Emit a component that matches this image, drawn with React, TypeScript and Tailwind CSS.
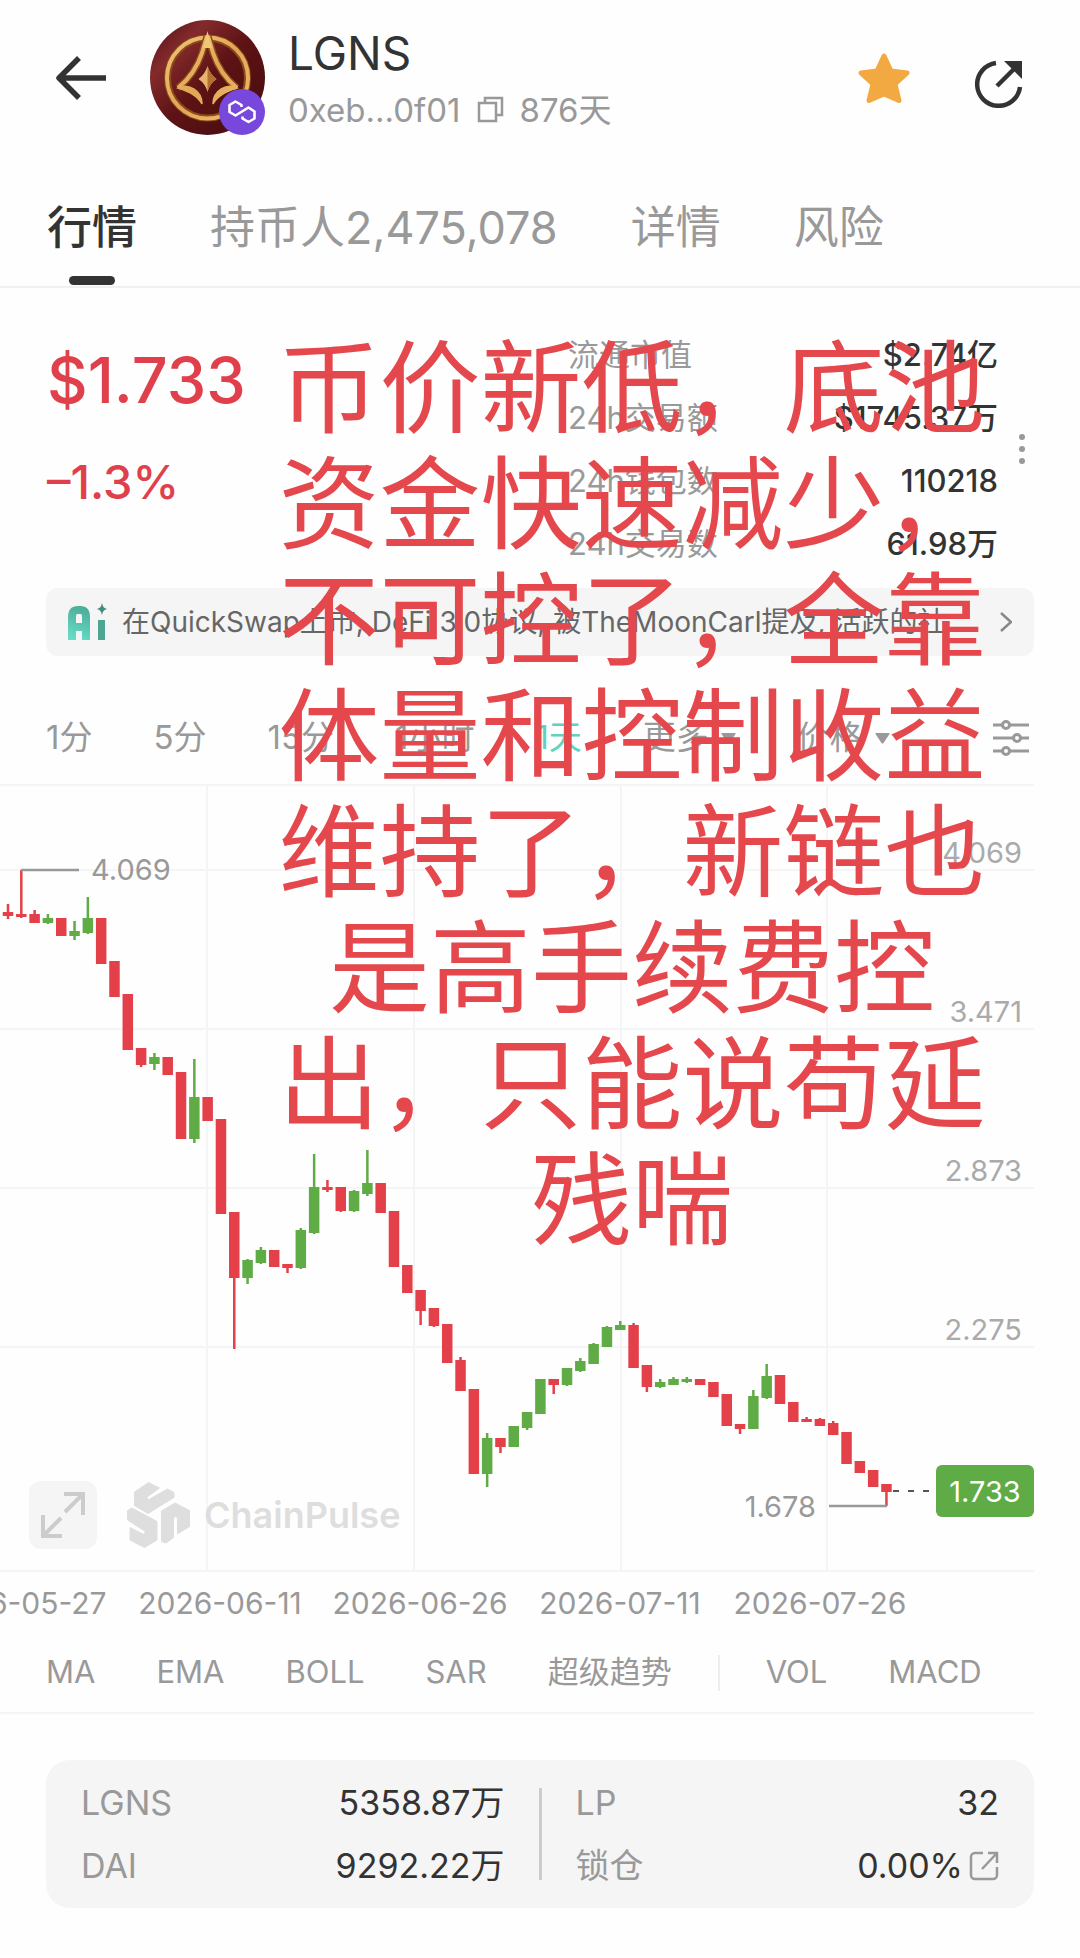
import { useState } from "react";

type Candle = [open: number, close: number, high: number, low: number];

// Pixel rows inside the plot: [open, close, high, low]. Smaller value = higher price.
const candles: Candle[] = [
  [128, 132, 120, 135], [130, 133, 86, 134], [130, 139, 126, 139], [139, 134, 130, 140],
  [134, 152, 134, 152], [152, 147, 137, 156], [149, 134, 113, 150], [134, 180, 134, 180],
  [177, 213, 177, 213], [210, 266, 210, 266], [264, 281, 264, 283], [280, 273, 269, 286],
  [273, 291, 273, 291], [288, 355, 288, 355], [355, 313, 275, 359], [313, 337, 313, 337],
  [335, 430, 335, 430], [428, 494, 428, 565], [494, 476, 475, 500], [479, 466, 463, 480],
  [466, 483, 466, 483], [480, 484, 480, 489], [484, 446, 444, 485], [449, 403, 370, 450],
  [403, 406, 396, 408], [403, 427, 403, 428], [427, 407, 406, 428], [410, 399, 366, 412],
  [399, 429, 399, 429], [427, 483, 427, 483], [481, 509, 481, 509], [506, 527, 506, 541],
  [524, 542, 524, 543], [540, 579, 540, 579], [576, 607, 573, 607], [605, 690, 605, 690],
  [690, 654, 649, 703], [654, 663, 654, 669], [663, 642, 642, 663], [644, 628, 628, 646],
  [630, 595, 595, 630], [595, 601, 595, 610], [601, 584, 584, 602], [587, 577, 574, 588],
  [580, 560, 559, 580], [563, 543, 542, 563], [546, 541, 537, 546], [541, 584, 539, 584],
  [581, 603, 581, 608], [603, 598, 595, 604], [601, 595, 593, 601], [598, 595, 593, 599],
  [595, 601, 595, 601], [598, 613, 598, 613], [610, 642, 610, 642], [640, 645, 640, 650],
  [645, 612, 606, 645], [614, 592, 580, 615], [591, 620, 591, 620], [618, 638, 618, 638],
  [635, 638, 633, 638], [635, 642, 634, 642], [639, 651, 637, 651], [648, 680, 648, 680],
  [677, 689, 677, 689], [686, 703, 686, 703], [700, 708, 700, 722],
];

const priceLevels = [
  { label: "4.069", y: 86 },
  { label: "3.471", y: 245 },
  { label: "2.873", y: 404 },
  { label: "2.275", y: 563 },
];

const tabs = ["行情", "持币人2,475,078", "详情", "风险"];

const stats = [
  { label: "流通市值", value: "$2.74亿" },
  { label: "24h交易额", value: "$1745.37万" },
  { label: "24h钱包数", value: "110218" },
  { label: "24h交易数", value: "61.98万" },
];

const intervals = ["1分", "5分", "15分", "1小时", "1天"];
const dates = ["2026-05-27", "2026-06-11", "2026-06-26", "2026-07-11", "2026-07-26"];
const mainIndicators = ["MA", "EMA", "BOLL", "SAR", "超级趋势"];
const subIndicators = ["VOL", "MACD"];

export default function App() {
  return (
    <div className="relative w-full overflow-hidden bg-[#fefefe] pb-12 font-['Inter','Noto_Sans_CJK_SC',sans-serif] text-[#999]">
      <TokenHeader />
      <Tabs />
      <main>
        <Summary />
        <AiBanner />
        <IntervalBar />
        <PriceChart />
        <IndicatorBar />
        <PoolCard />
      </main>
      <p className="pointer-events-none absolute top-[330px] left-[272px] w-[720px] text-center text-[101px] leading-[116px] text-[#e4484d]">
        币价新低，底池资金快速减少，不可控了，全靠体量和控制收益维持了，新链也是高手续费控出，只能说苟延残喘
      </p>
    </div>
  );
}

const TokenHeader = () => (
  <header className="flex h-[155px] items-center pr-[57px] pl-[55px]">
    <button aria-label="返回" className="text-[#333]">
      <svg width="52" height="44" viewBox="0 0 52 44" fill="none" stroke="currentColor" strokeWidth="5.500">
        <path d="M51 22H4M24 2L4 22l20 20" strokeLinejoin="round" />
      </svg>
    </button>
    <div className="relative ml-[43px]">
      <TokenLogo />
      <span className="absolute right-0 bottom-0 flex size-[46px] items-center justify-center rounded-full bg-[#7847dc]">
        <svg width="30" height="26" viewBox="0 0 30 26" fill="none" stroke="#fff" strokeWidth="2.600" strokeLinejoin="round">
          <path d="M14.500 8V6L8.500 2.500 2.500 6v7l6 3.500 13-8 6 4v7l-6 3.500-6-3.500v-2" />
        </svg>
      </span>
    </div>
    <div className="ml-[23px] pt-2">
      <h1 className="text-[46px] leading-[56px] text-[#333]">LGNS</h1>
      <div className="flex items-center text-[33px] leading-[58px]">
        <span>0xeb...0f01</span>
        <button aria-label="复制" className="mx-4">
          <svg width="27" height="27" viewBox="0 0 27 27" fill="none" stroke="currentColor" strokeWidth="2.500">
            <path d="M2 7h17v18H2zM8 7V2h17v17h-6" />
          </svg>
        </button>
        <span>876天</span>
      </div>
    </div>
    <button aria-label="收藏" className="ml-auto text-[#f2a942]">
      <svg width="54" height="52" viewBox="0 0 54 52" fill="currentColor" stroke="currentColor" strokeWidth="5" strokeLinejoin="round">
        <path d="M27 4l7 15 16 2-12 11 4 16.500L27 42l-15 6.500L16 32 4 21l16-2z" />
      </svg>
    </button>
    <button aria-label="分享" className="mt-3 ml-[64px] text-[#333]">
      <svg width="48" height="48" viewBox="0 0 48 48" fill="none" stroke="currentColor" strokeWidth="4.500">
        <path d="M21 3A21.500 21.500 0 1 0 45 27M22 26L39 9" />
        <path d="M29 1h18v18z" fill="currentColor" stroke="none" />
      </svg>
    </button>
  </header>
);

const TokenLogo = () => (
  <svg width="115" height="115" viewBox="0 0 115 115" fill="none">
    <defs>
      <linearGradient id="coin" x1="0" y1="0" x2="1" y2="1">
        <stop offset="0" stopColor="#4e0f11" />
        <stop offset="0.25" stopColor="#832a2c" />
        <stop offset="0.5" stopColor="#5e1315" />
        <stop offset="1" stopColor="#430c0e" />
      </linearGradient>
      <linearGradient id="gold" gradientUnits="userSpaceOnUse" x1="15" y1="15" x2="100" y2="100">
        <stop offset="0" stopColor="#f0c777" />
        <stop offset="0.5" stopColor="#e2a654" />
        <stop offset="1" stopColor="#f0bf6c" />
      </linearGradient>
    </defs>
    <circle cx="57.500" cy="57.500" r="57.500" fill="url(#coin)" />
    <circle cx="57.500" cy="58" r="40" stroke="#8a4a1c" strokeWidth="7" />
    <circle cx="57.500" cy="58" r="40.500" stroke="url(#gold)" strokeWidth="4" />
    <path d="M57 16L52 33C47 48 38 60 28 68M58 16l5 17C68 48 77 60 87 68" stroke="#8a4a1c" strokeWidth="7" />
    <path d="M57 16L52 33C47 48 38 60 28 68M58 16l5 17C68 48 77 60 87 68" stroke="url(#gold)" strokeWidth="4" />
    <path d="M28 68c10-5 24 2 24 16-4-8-12-12-24-16zM87 68c-10-5-24 2-24 16 4-8 12-12 24-16z" fill="url(#gold)" stroke="url(#gold)" strokeWidth="1.500" />
    <path d="M57.500 11L53 28h9z" fill="#f0c777" />
    <path d="M57.500 46c2 6 5 10 9 13-4 3-7 6-9 13-2-7-5-10-9-13 4-3 7-7 9-13z" fill="#e9b56a" />
    <path d="M57.500 46c2 6 5 10 9 13-4 3-7 6-9 13z" fill="#b4702f" />
  </svg>
);

function Tabs() {
  const [active, setActive] = useState<string>("行情");

  return (
    <nav className="flex h-[133px] items-end gap-[73px] border-b-2 border-[#f0f0f0] pb-px pl-[47px] text-[45px] leading-[60px]">
      {tabs.map((tab) => (
        <button
          key={tab}
          onClick={() => setActive(tab)}
          className={`flex flex-col items-center gap-[18px] whitespace-nowrap ${active === tab ? "font-medium text-[#333]" : ""}`}
        >
          {tab}
          <span className={`h-[9px] w-[46px] rounded-full ${active === tab ? "bg-[#333]" : ""}`} />
        </button>
      ))}
    </nav>
  );
}

const Summary = () => (
  <section className="flex justify-between pt-[35px] pr-[46px] pb-[13px] pl-[47px]">
    <div className="pt-[21px] font-medium text-[#e0404b]">
      <div className="text-[63px] leading-[72px]">$1.733</div>
      <div className="mt-[36px] text-[47px] leading-[60px]">–1.3%</div>
    </div>
    <div className="flex items-center">
      <dl className="w-[430px] text-[31px] leading-[63px]">
        {stats.map((item) => (
          <div key={item.label} className="flex justify-between">
            <dt>{item.label}</dt>
            <dd className="font-medium text-[#333]">{item.value}</dd>
          </div>
        ))}
      </dl>
      <button aria-label="更多数据" className="ml-3 flex w-6 flex-col items-center gap-[6px]">
        <span className="size-[6px] rounded-full bg-[#999]" />
        <span className="size-[6px] rounded-full bg-[#999]" />
        <span className="size-[6px] rounded-full bg-[#999]" />
      </button>
    </div>
  </section>
);

const AiBanner = () => (
  <a href="#ai" className="mx-[46px] flex h-[68px] items-center rounded-xl bg-[#f5f5f5] px-[22px] text-[28px] text-[#666]">
    <svg width="40" height="38" viewBox="0 0 40 38" fill="none" className="shrink-0">
      <defs>
        <linearGradient id="ai" gradientUnits="userSpaceOnUse" x1="20" y1="4" x2="8" y2="36">
          <stop offset="0" stopColor="#4aa997" />
          <stop offset="1" stopColor="#66dcc6" />
        </linearGradient>
      </defs>
      <path d="M4 37V14q0-7 6-7h2q6 0 6 7V37M4 24h14" stroke="url(#ai)" strokeWidth="8" />
      <path d="M30 17h7v20h-7z" fill="#4fa593" />
      <path d="M34 0c1 4 2 5 5 6-3 1-4 2-5 6-1-4-2-5-5-6 3-1 4-2 5-6z" fill="#3f8f80" />
    </svg>
    <span className="ml-[14px] min-w-0 flex-1 whitespace-nowrap">
      在QuickSwap上市, DeFi 3.0协议, 被TheMoonCarl提及, 活跃的社...
    </span>
    <svg width="12" height="22" viewBox="0 0 12 22" fill="none" stroke="#888" strokeWidth="2.500" className="shrink-0">
      <path d="M1 2l10 9-10 9" />
    </svg>
  </a>
);

const Caret = () => (
  <svg width="15" height="11" viewBox="0 0 15 11" fill="currentColor">
    <path d="M1 0h13q1 0 .5 1L8.500 10q-1 1-2 0L.5 1Q0 0 1 0z" />
  </svg>
);

function IntervalBar() {
  const [active, setActive] = useState<string>("1天");

  return (
    <div className="mt-[36px] flex h-[92px] items-center gap-[61px] pr-[51px] pl-[46px] text-[33px] whitespace-nowrap">
      {intervals.map((item) => (
        <button key={item} onClick={() => setActive(item)} className={active === item ? "text-[#5fd3bf]" : ""}>
          {item}
        </button>
      ))}
      <button className="flex items-center gap-3">
        更多 <Caret />
      </button>
      <button className="flex items-center gap-3">
        价格 <Caret />
      </button>
      <button aria-label="图表设置" className="ml-auto">
        <svg width="36" height="36" viewBox="0 0 36 36" fill="#fefefe" stroke="currentColor" strokeWidth="3">
          <path d="M0 5h36M0 18h36M0 31h36" />
          <circle cx="13" cy="5" r="3.500" />
          <circle cx="24" cy="18" r="3.500" />
          <circle cx="13" cy="31" r="3.500" />
        </svg>
      </button>
    </div>
  );
}

const PriceChart = () => (
  <section>
    <div className="relative mr-[46px]">
      <svg viewBox="0 0 1034 788" className="block w-full" fontSize="29" fill="#aaa">
        <g stroke="#f5f5f5" strokeWidth="2">
          <path d="M0 1H1034M0 787H1034M207 0V787M414 0V787M621 0V787M827 0V787" />
          {priceLevels.map((level) => (
            <path key={level.label} d={`M0 ${level.y}H1034`} />
          ))}
        </g>
        {priceLevels.map((level) => (
          <text key={level.label} x="1022" y={level.y - 7} textAnchor="end">
            {level.label}
          </text>
        ))}
        {candles.map(([open, close, high, low], index) => {
          const x = 8 + index * 13.31;
          return (
            <g key={index} fill={close > open ? "#e4404a" : "#5fac47"}>
              <rect x={x - 1.25} y={high} width="2.500" height={low - high} />
              <rect x={x - 5.25} y={Math.min(open, close)} width="10.500" height={Math.abs(close - open)} />
            </g>
          );
        })}
        <path d="M21 86H79M829 722H887" stroke="#999" strokeWidth="2.500" />
        <path d="M893 707H930" stroke="#555" strokeWidth="2" strokeDasharray="6 9" />
        <text x="91" y="96" fill="#999">4.069</text>
        <text x="816" y="733" textAnchor="end" fill="#999">1.678</text>
        <rect x="936" y="681" width="98" height="52" rx="6" fill="#5fac47" />
        <text x="985" y="718" textAnchor="middle" fill="#fff">1.733</text>
      </svg>
      <div className="absolute bottom-[23px] left-[29px] flex items-center">
        <button aria-label="全屏" className="flex size-[68px] items-center justify-center rounded-xl bg-[#f5f5f5]">
          <svg width="44" height="46" viewBox="0 0 44 46" fill="none" stroke="#ccc" strokeWidth="4">
            <path d="M23 2h19v21M42 2L24 20M21 44H2V23M2 44l18-18" />
          </svg>
        </button>
        <svg width="63" height="66" viewBox="0 0 63 66" fill="#dedede" stroke="#dedede" strokeLinejoin="round" className="ml-[30px]">
          <path d="M7.500 10L21.500 0.500 32.500 6 20 15l1 3L40.500 7 47 10.500v5L21 31.500 7.500 23.500z" />
          <path d="M.5 28.500L5 26l25 13.500V58l-12.500 7.500L3 58V45.500l13.500 7 2-3L.5 38z" />
          <path d="M34.500 29L48 21l14.500 7.500v16l-12 7.500V36L48 34l-1.500 3v18.500L39 61l-4.500-1.500z" />
        </svg>
        <span className="ml-[14px] text-[36px] font-semibold text-[#dedede]">ChainPulse</span>
      </div>
    </div>
    <div className="mr-[160px] -ml-[80px] grid grid-cols-5 pt-[11px] text-center text-[30px] leading-[40px] whitespace-nowrap">
      {dates.map((date) => (
        <span key={date}>{date}</span>
      ))}
    </div>
  </section>
);

const IndicatorBar = () => (
  <div className="mt-[10px] mr-[46px] flex h-[81px] items-center gap-[61px] border-b-2 border-[#f5f5f5] pl-[46px] text-[31px] whitespace-nowrap">
    {mainIndicators.map((item) => (
      <button key={item}>{item}</button>
    ))}
    <span className="-mx-[15px] h-9 w-[2px] bg-[#eee]" />
    {subIndicators.map((item) => (
      <button key={item}>{item}</button>
    ))}
  </div>
);

type PoolRowProps = {
  label: string;
  value: string;
  link?: boolean;
};
const PoolRow = ({ label, value, link }: PoolRowProps) => (
  <div className="flex items-center justify-between">
    <dt>{label}</dt>
    <dd className="flex items-center text-[#333]">
      {value}
      {link && (
        <a href="#lock" aria-label="查看锁仓" className="ml-[6px] text-[#999]">
          <svg width="30" height="30" viewBox="0 0 30 30" fill="none" stroke="currentColor" strokeWidth="2.500">
            <path d="M14 2H6a4 4 0 0 0-4 4v18a4 4 0 0 0 4 4h18a4 4 0 0 0 4-4v-8M19 2h9v10M28 2L13 18" />
          </svg>
        </a>
      )}
    </dd>
  </div>
);

const PoolCard = () => (
  <section className="mx-[46px] mt-[46px] flex items-center rounded-3xl bg-[#f5f5f5] px-[35px] py-[11px] text-[34px] leading-[63px]">
    <dl className="flex-1">
      <PoolRow label="LGNS" value="5358.87万" />
      <PoolRow label="DAI" value="9292.22万" />
    </dl>
    <span className="mx-[34px] h-[92px] w-[3px] bg-[#ccc]" />
    <dl className="flex-1">
      <PoolRow label="LP" value="32" />
      <PoolRow label="锁仓" value="0.00%" link />
    </dl>
  </section>
);
